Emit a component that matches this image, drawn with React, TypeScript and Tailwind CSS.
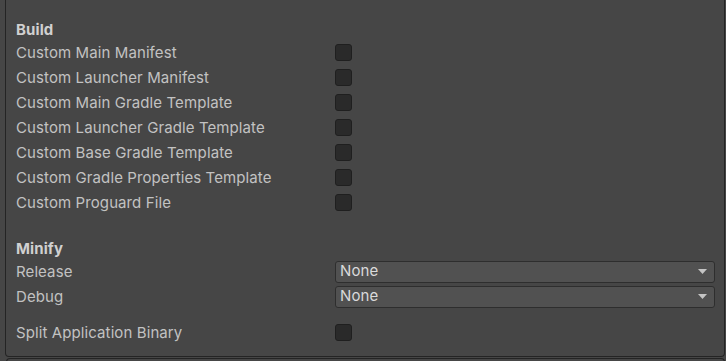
import React from "react";

const buildItems = [
  "Custom Main Manifest",
  "Custom Launcher Manifest",
  "Custom Main Gradle Template",
  "Custom Launcher Gradle Template",
  "Custom Base Gradle Template",
  "Custom Gradle Properties Template",
  "Custom Proguard File",
];

function Checkbox() {
  return <div className="w-[17px] h-[17px] rounded-[3px] bg-[#2a2a2a] border border-[#1f1f1f]" />;
}

function Dropdown({ value }: { value: string }) {
  return (
    <div className="flex-1 h-[22px] flex items-center justify-between pl-[4px] pr-[7px] rounded-[3px] bg-[#515151] border border-[#2e2e2e] text-[#dadada]">
      <span>{value}</span>
      <svg width="9" height="5" viewBox="0 0 9 5">
        <path d="M0 0 L9 0 L4.5 5 Z" fill="#c4c4c4" />
      </svg>
    </div>
  );
}

function Row({ label, children }: { label: string; children: React.ReactNode }) {
  return (
    <div className="h-[25px] flex items-center">
      <div className="w-[319px] shrink-0 pt-[2px]">{label}</div>
      {children}
    </div>
  );
}

export default function App() {
  return (
    <div
      className="w-[726px] h-[361px] overflow-hidden bg-[#464646] text-[15px] tracking-[0.1px] text-[#c2c2c2]"
      style={{ fontFamily: "Inter, 'Noto Sans', sans-serif" }}
    >
      <div className="ml-[5px] mr-[1px] h-[357px] border-l border-r border-b border-[#242424] rounded-b-[4px] pl-[10px] pr-[9px] pt-[20px]">
        <div className="h-[20px] flex items-center pt-[1px] font-bold text-[#d0d0d0]">Build</div>
        {buildItems.map((t) => (
          <Row key={t} label={t}>
            <Checkbox />
          </Row>
        ))}
        <div className="h-[24px]" />
        <div className="h-[20px] flex items-center pt-[1px] font-bold text-[#d0d0d0]">Minify</div>
        <Row label="Release">
          <Dropdown value="None" />
        </Row>
        <Row label="Debug">
          <Dropdown value="None" />
        </Row>
        <div className="h-[11px]" />
        <Row label="Split Application Binary">
          <Checkbox />
        </Row>
      </div>
      <div className="ml-[6px] mr-[1px] mt-[1px] h-[4px] border-t border-l border-r border-[#242424] rounded-t-[4px]" />
    </div>
  );
}
